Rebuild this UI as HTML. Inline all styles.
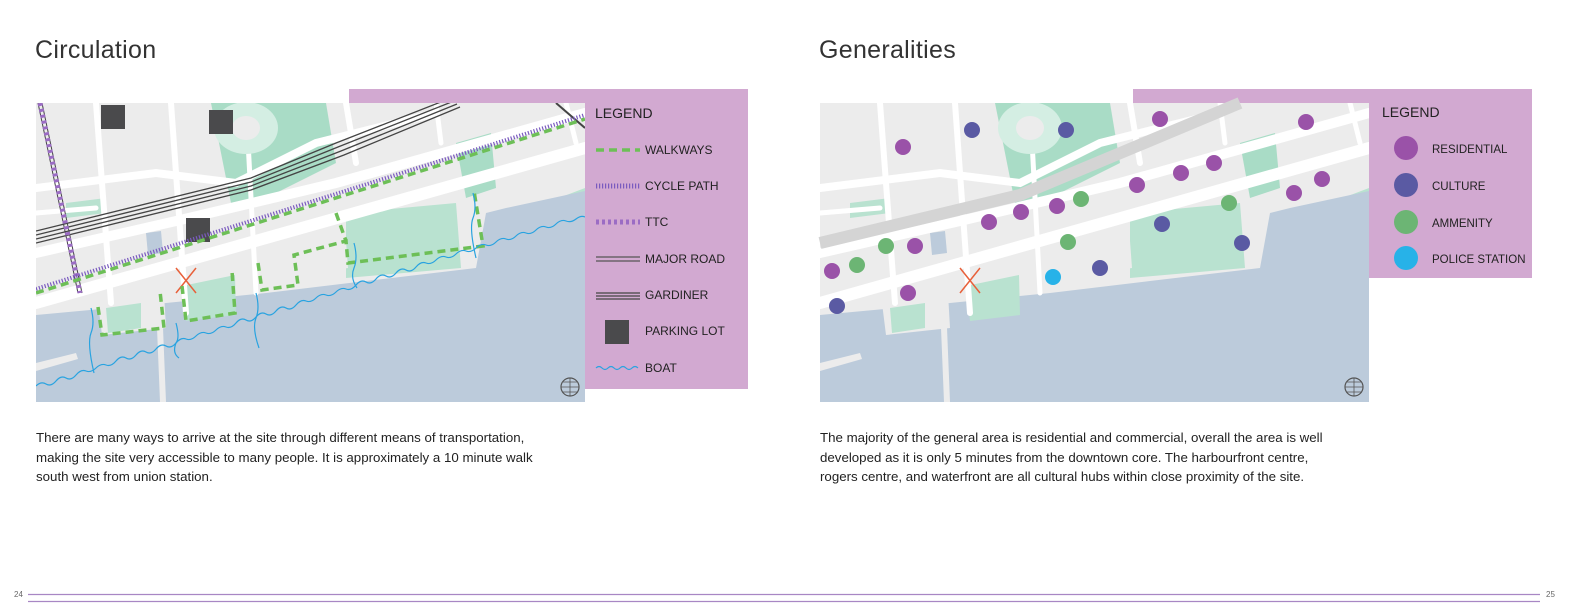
<!DOCTYPE html>
<html><head><meta charset="utf-8"><style>
body{margin:0;width:1584px;height:612px;background:#fff;position:relative;overflow:hidden;font-family:"Liberation Sans",sans-serif;color:#222}
.t{position:absolute;font-size:25px;font-weight:300;color:#333;letter-spacing:0.3px}
.p{position:absolute;font-size:13.3px;line-height:19.5px;color:#222}
svg{position:absolute;left:0;top:0}
</style></head><body>
<div class="t" style="left:35px;top:36px">Circulation</div>
<div class="t" style="left:819px;top:36px">Generalities</div>
<svg width="1584" height="612" viewBox="0 0 1584 612">
<defs>
<clipPath id="c"><rect x="0" y="0" width="549" height="299"/></clipPath>
<g id="m" clip-path="url(#c)">
<rect width="549" height="299" fill="#ececec"/>
<path d="M175 0 H290 L300 60 L240 90 L195 100 Z" fill="#a9dcc6"/>
<path d="M420 40 L455 30 L460 85 L430 95 Z" fill="#a9dcc6"/>
<path d="M310 110 L420 100 L425 165 L310 175 Z" fill="#b9e2d0"/>
<path d="M470 115 L549 85 L549 140 L490 150 Z" fill="#b9e2d0"/>
<path d="M30 100 L70 95 L70 110 L30 115 Z" fill="#b9e2d0"/>
<path d="M0 212 L130 200 L230 190 L330 178 L440 165 L450 110 L470 105 L549 88 L549 299 L0 299 Z" fill="#bccbdb"/>
<path d="M62 200 L128 190 L130 225 L66 232 Z" fill="#ececec"/>
<path d="M70 205 L105 200 L105 225 L72 230 Z" fill="#b9e2d0"/>
<path d="M146 183 L199 172 L200 212 L150 218 Z" fill="#b9e2d0"/>
<path d="M222 160 L260 152 L262 182 L226 187 Z" fill="#ececec"/>
<path d="M258 152 L310 138 L312 165 L262 172 Z" fill="#ececec"/>
<path d="M120 200 L126 200 L130 299 L124 299 Z" fill="#ececec"/>
<path d="M0 260 L40 250 L42 256 L0 268 Z" fill="#ececec"/>
<path d="M110 130 L125 128 L127 150 L112 152 Z" fill="#bccbdb"/>
<g stroke="#fff" fill="none" stroke-linecap="round">
<path d="M0 150 L140 118 L300 80 L549 10" stroke-width="10"/>
<path d="M0 200 L549 45" stroke-width="12"/>
<path d="M0 85 L120 70 L200 80 L280 40 L400 10" stroke-width="8"/>
<path d="M60 0 L75 200" stroke-width="6"/>
<path d="M135 0 L150 210" stroke-width="6"/>
<path d="M210 0 L220 190" stroke-width="5"/>
<path d="M310 0 L320 60" stroke-width="6"/>
<path d="M400 0 L405 40" stroke-width="5"/>
<path d="M530 0 L540 40" stroke-width="5"/>
<path d="M0 110 L60 105" stroke-width="5"/>
</g>
<ellipse cx="210" cy="25" rx="32" ry="26" fill="#d4eee3"/>
<ellipse cx="210" cy="25" rx="14" ry="12" fill="#ececec"/>
<path d="M140 165 L160 190 M160 165 L140 190" stroke="#e8603a" stroke-width="1.5"/>
<circle cx="534" cy="284" r="9" fill="none" stroke="#555" stroke-width="1.2"/>
<path d="M525 284 H543 M534 275 V293 M527 279 H541 M527 289 H541" stroke="#555" stroke-width="0.8"/>
</g>
</defs>

<rect x="349" y="89" width="399" height="14" fill="#d2a9d1"/>
<rect x="585" y="89" width="163" height="300" fill="#d2a9d1"/>
<use href="#m" x="36" y="103"/>
<g transform="translate(36,103)" clip-path="url(#c)">
 <rect x="65" y="2" width="24" height="24" fill="#4a4a4c"/>
 <rect x="173" y="7" width="24" height="24" fill="#4a4a4c"/>
 <rect x="150" y="115" width="24" height="24" fill="#4a4a4c"/>
 <g stroke="#444" fill="none" stroke-width="1.3">
  <path d="M0 128 L215 75 L300 40 L415 -5"/><path d="M0 132 L215 79 L302 44 L418 -2"/>
  <path d="M0 136 L215 83 L305 48 L421 1"/><path d="M0 140 L215 87 L308 52 L424 4"/>
 </g>
 <path d="M2 0 L42 190 M6 0 L46 190" stroke="#444" stroke-width="1"/>
 <path d="M520 0 L549 25" stroke="#444" stroke-width="2"/>
 <path d="M4 0 L44 190" stroke="#9b6cc4" stroke-width="5" stroke-dasharray="3 3" fill="none"/>
 <g fill="none" stroke="#6dbf57" stroke-width="3.5" stroke-dasharray="8 5">
  <path d="M0 190 L549 16"/>
  <path d="M62 204 L66 232 L128 225 L124 188"/>
  <path d="M146 183 L150 218 L199 210 L196 168"/>
  <path d="M222 160 L226 187 L262 182 L258 152 L310 138 L312 160 L447 143 L438 88"/>
  <path d="M300 110 L310 138"/>
 </g>
 <path d="M0 186 L549 12" stroke="#7a5bbf" stroke-width="4" stroke-dasharray="1.2 1.8" fill="none"/>
 <g fill="none" stroke="#29a3e0" stroke-width="1.2">
  <path d="M0 283 Q5 278 10 281 T20 278 T30 275 T40 272 T50 268 T60 265 T70 262 T80 258 T90 255 T100 252 T110 249 T120 246 T130 243 T140 240 T150 236 T160 233 T170 230 T180 227 T190 224 T200 220 T210 217 T220 214 T230 211 T240 208 T250 205 T260 202 T270 198 T280 195 T290 192 T300 189 T310 186 T320 182 T330 179 T340 176 T350 173 T360 170 T370 167 T380 164 T390 160 T400 157 T410 154 T420 151 T430 148 T440 145 T450 142 T460 139 T470 136 T480 133 T490 130 T500 127 T510 124 T520 121 T530 118 T540 116 T549 114"/>
  <path d="M55 205 q4 15 0 25 q-4 10 3 40"/>
  <path d="M140 220 q4 15 0 20 q-4 10 3 15"/>
  <path d="M220 190 q4 15 0 25 q-4 10 3 30"/>
  <path d="M318 140 q4 15 0 25 q-4 10 3 20"/>
  <path d="M437 90 q4 15 0 25 q-4 10 3 40"/>
 </g>
</g>
<text x="595" y="118" font-size="14" fill="#222" font-family="Liberation Sans">LEGEND</text>
<path d="M596 150 H640" stroke="#6dbf57" stroke-width="3.5" stroke-dasharray="8 5"/>
<path d="M596 186 H640" stroke="#7a5bbf" stroke-width="5" stroke-dasharray="1.2 1.8"/>
<path d="M596 222 H640" stroke="#9b6cc4" stroke-width="5" stroke-dasharray="3 3"/>
<path d="M596 257 H640 M596 261 H640" stroke="#555" stroke-width="1.3"/>
<path d="M596 293 H640 M596 296 H640 M596 299 H640" stroke="#444" stroke-width="1.3"/>
<rect x="605" y="320" width="24" height="24" fill="#4a4a4c"/>
<path d="M596 368 q3 -3 6 0 t6 0 t6 0 t6 0 t6 0 t6 0 t6 0" stroke="#29a3e0" stroke-width="1.2" fill="none"/>
<g font-size="12" fill="#222" font-family="Liberation Sans">
<text x="645" y="154">WALKWAYS</text><text x="645" y="190">CYCLE PATH</text><text x="645" y="226">TTC</text>
<text x="645" y="263">MAJOR ROAD</text><text x="645" y="299">GARDINER</text><text x="645" y="335">PARKING LOT</text><text x="645" y="372">BOAT</text>
</g>

<rect x="1133" y="89" width="399" height="14" fill="#d2a9d1"/>
<rect x="1369" y="89" width="163" height="189" fill="#d2a9d1"/>
<use href="#m" x="820" y="103"/>
<path d="M820 243 L1020 195 L1240 103" stroke="#d4d4d4" stroke-width="12" fill="none"/>
<g fill="#9a52a8">
<circle cx="903" cy="147" r="8"/><circle cx="1160" cy="119" r="8"/><circle cx="1306" cy="122" r="8"/><circle cx="1137" cy="185" r="8"/><circle cx="1181" cy="173" r="8"/><circle cx="1214" cy="163" r="8"/><circle cx="1294" cy="193" r="8"/><circle cx="1322" cy="179" r="8"/><circle cx="989" cy="222" r="8"/><circle cx="1021" cy="212" r="8"/><circle cx="1057" cy="206" r="8"/><circle cx="915" cy="246" r="8"/><circle cx="832" cy="271" r="8"/><circle cx="908" cy="293" r="8"/>
</g>
<g fill="#5a5aa3">
<circle cx="972" cy="130" r="8"/><circle cx="1066" cy="130" r="8"/><circle cx="1162" cy="224" r="8"/><circle cx="1242" cy="243" r="8"/><circle cx="1100" cy="268" r="8"/><circle cx="837" cy="306" r="8"/>
</g>
<g fill="#6cb574">
<circle cx="1081" cy="199" r="8"/><circle cx="1229" cy="203" r="8"/><circle cx="1068" cy="242" r="8"/><circle cx="886" cy="246" r="8"/><circle cx="857" cy="265" r="8"/>
</g>
<circle cx="1053" cy="277" r="8" fill="#27b2e8"/>
<text x="1382" y="117" font-size="14" fill="#222" font-family="Liberation Sans">LEGEND</text>
<circle cx="1406" cy="148" r="12" fill="#9a52a8"/>
<circle cx="1406" cy="185" r="12" fill="#5a5aa3"/>
<circle cx="1406" cy="222" r="12" fill="#6cb574"/>
<circle cx="1406" cy="258" r="12" fill="#27b2e8"/>
<g font-size="11.5" fill="#222" font-family="Liberation Sans">
<text x="1432" y="153">RESIDENTIAL</text><text x="1432" y="190">CULTURE</text><text x="1432" y="227">AMMENITY</text><text x="1432" y="263">POLICE STATION</text>
</g>

<path d="M28 594.5 H1540 M28 601.5 H1540" stroke="#a887c4" stroke-width="1.3"/>
<text x="14" y="597" font-size="8" fill="#666" font-family="Liberation Sans">24</text>
<text x="1546" y="597" font-size="8" fill="#666" font-family="Liberation Sans">25</text>
</svg>
<div class="p" style="left:36px;top:428px;width:525px">There are many ways to arrive at the site through different means of transportation, making the site very accessible to many people. It is approximately a 10 minute walk south west from union station.</div>
<div class="p" style="left:820px;top:428px;width:525px">The majority of the general area is residential and commercial, overall the area is well developed as it is only 5 minutes from the downtown core. The harbourfront centre, rogers centre, and waterfront are all cultural hubs within close proximity of the site.</div>
</body></html>
